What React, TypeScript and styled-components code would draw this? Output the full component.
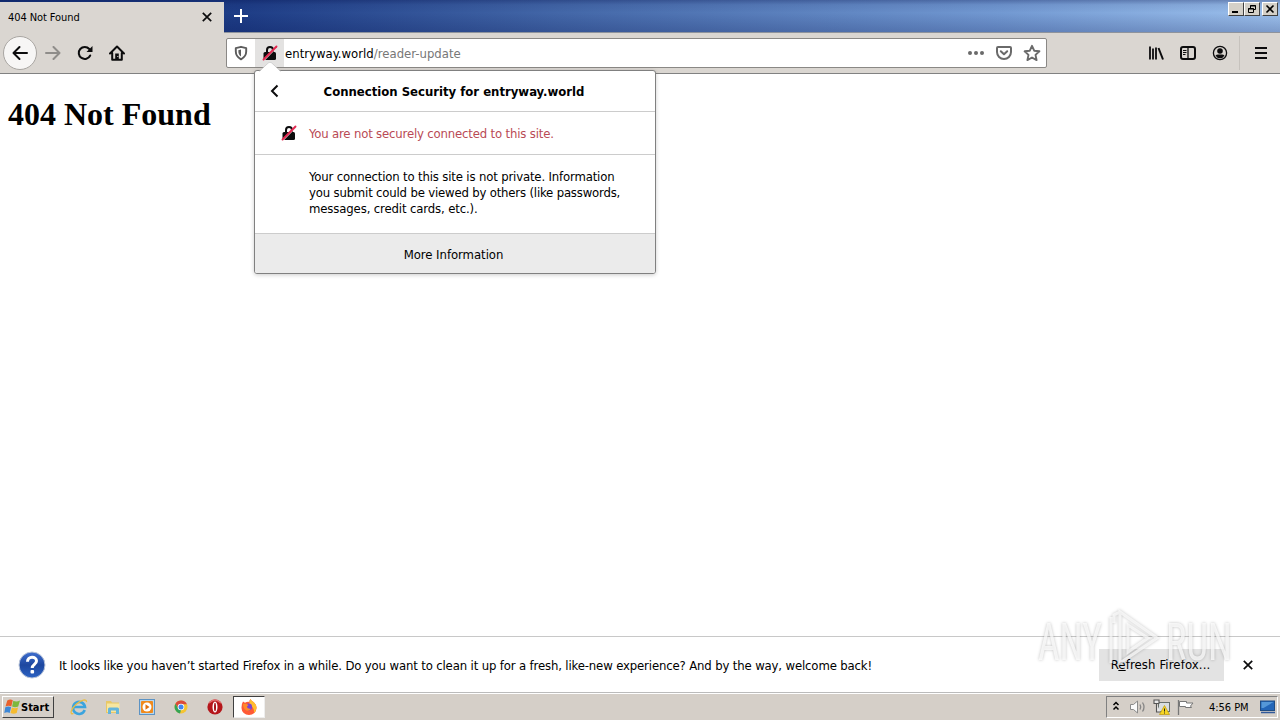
import { ReactNode } from 'react';
import styled, { createGlobalStyle } from 'styled-components';

const UI_FONT = "'DejaVu Sans Condensed', 'DejaVu Sans', sans-serif";

const COLORS = {
  chrome: '#dad6d1',
  taskbar: '#d5cfc8',
  line: '#818181',
  icon: '#0c0c0d',
  muted: '#6a6a6a',
  danger: '#b94a55',
};

const App = () => {
  return (
    <Screen>
      <GlobalStyle />
      <TitleBar>
        <Tab>
          <Label size={11} spacing={-0.08} drop={1}>404 Not Found</Label>
          <CloseIcon />
        </Tab>
        <NewTab>
          <svg width="14" height="14" viewBox="0 0 14 14">
            <path d="M7 0v14M0 7h14" stroke="#fff" strokeWidth="2" />
          </svg>
        </NewTab>
        <WindowControls>
          <WindowButton>
            <svg width="12" height="10"><path d="M2 8h6" stroke="#000" strokeWidth="2" /></svg>
          </WindowButton>
          <WindowButton>
            <svg width="12" height="10" fill="none" stroke="#000">
              <path d="M4.5 4V1.5h5v4H8M4 2h6M2.5 4.5h5v4h-5zM2 5h6" />
            </svg>
          </WindowButton>
          <WindowButton $gap>
            <svg width="12" height="10"><path d="M2.500 1.500l7 7M9.500 1.500l-7 7" stroke="#000" strokeWidth="1.600" /></svg>
          </WindowButton>
        </WindowControls>
      </TitleBar>

      <Toolbar>
        <BackButton>
          <ArrowIcon color={COLORS.icon} />
        </BackButton>
        <NavButtons>
          <Flip><ArrowIcon color="#8f8d8a" /></Flip>
          <ReloadIcon />
          <HomeIcon />
        </NavButtons>
        <UrlBar>
          <ShieldBox><ShieldIcon /></ShieldBox>
          <LockBox><LockIcon /></LockBox>
          <Label size={13} spacing={0.01} drop={2}>
            entryway.world<Path>/reader-update</Path>
          </Label>
          <UrlActions>
            <svg width="16" height="16" viewBox="0 0 16 16" fill={COLORS.muted}>
              <circle cx="2" cy="8" r="2" /><circle cx="8" cy="8" r="2" /><circle cx="14" cy="8" r="2" />
            </svg>
            <PocketIcon />
            <StarIcon />
          </UrlActions>
        </UrlBar>
        <ToolButtons>
          <LibraryIcon />
          <SidebarIcon />
          <AccountIcon />
        </ToolButtons>
        <MenuBox>
          <svg width="12" height="12" viewBox="0 0 12 12">
            <path d="M0 1h12M0 6h12M0 11h12" stroke={COLORS.icon} strokeWidth="2" />
          </svg>
        </MenuBox>
      </Toolbar>

      <Page>
        <PageTitle>404 Not Found</PageTitle>
      </Page>

      <Notification>
        <HelpIcon />
        <Label size={13} spacing={-0.143} drop={2}>
          It looks like you haven’t started Firefox in a while. Do you want to clean it up for a fresh, like-new experience? And by the way, welcome back!
        </Label>
        <RefreshButton>
          <Label size={13} spacing={0.12}>R<u>e</u>fresh Firefox...</Label>
        </RefreshButton>
        <CloseIcon />
      </Notification>

      <Taskbar>
        <StartButton>
          <WindowsLogo />
          Start
        </StartButton>
        <TaskIcons>
          <IeIcon />
          <FolderIcon />
          <PlayerIcon />
          <ChromeIcon />
          <OperaIcon />
        </TaskIcons>
        <ActiveTask><FirefoxIcon /></ActiveTask>
        <Tray>
          <TrayIcons />
          <Label size={11} spacing={-0.04} drop={1}>4:56 PM</Label>
          <DesktopIcon />
        </Tray>
      </Taskbar>

      <Popup>
        <PopupArrow width="22" height="10" viewBox="0 0 22 10">
          <path d="M0 10L9.500 .800Q11-.400 12.500.800L22 10z" fill="#fff" />
          <path d="M0 9.500L9.500.800Q11-.400 12.500.800L22 9.500" fill="none" stroke="#c4c4c4" strokeWidth=".7" />
        </PopupArrow>
        <PopupHeader>
          <svg width="10" height="14" viewBox="0 0 10 14">
            <path d="M7.500 1.500L2 7 7.500 12.500" fill="none" stroke={COLORS.icon} strokeWidth="2" />
          </svg>
          <HeaderText>
            <Label size={13} spacing={-0.01} bold>Connection Security for entryway.world</Label>
          </HeaderText>
        </PopupHeader>
        <PopupStatus>
          <LockIcon />
          <Label size={13} spacing={-0.17} drop={1}>You are not securely connected to this site.</Label>
        </PopupStatus>
        <PopupBody>
          <Label size={13} spacing={-0.16}>Your connection to this site is not private. Information</Label>
          <Label size={13} spacing={-0.18}>you submit could be viewed by others (like passwords,</Label>
          <Label size={13} spacing={-0.13}>messages, credit cards, etc.).</Label>
        </PopupBody>
        <PopupFooter>
          <Label size={13} spacing={-0.04} drop={2}>More Information</Label>
        </PopupFooter>
      </Popup>

      <Watermark />
    </Screen>
  );
};

export default App;

type LabelProps = { size: number; spacing: number; bold?: boolean; drop?: number; children: ReactNode };

const Label = ({ size, spacing, bold, drop = 0, children }: LabelProps) => (
  <LabelText $size={size} $spacing={spacing} $bold={bold} $drop={drop}>{children}</LabelText>
);

const CloseIcon = () => (
  <svg width="10" height="10" viewBox="0 0 10 10">
    <path d="M.8.8l8.400 8.400M9.200.8L.8 9.200" stroke={COLORS.icon} strokeWidth="1.700" />
  </svg>
);

const ArrowIcon = ({ color }: { color: string }) => (
  <svg width="16" height="16" viewBox="0 0 16 16" fill="none" stroke={color} strokeWidth="2" strokeLinecap="round" strokeLinejoin="round">
    <path d="M7.500 2L1.500 8l6 6M2 8h13" />
  </svg>
);

const ReloadIcon = () => (
  <svg width="16" height="16" viewBox="0 0 16 16">
    <path d="M13.200 10.500A6 6 0 1 1 12.300 4" fill="none" stroke={COLORS.icon} strokeWidth="2" strokeLinecap="round" />
    <path d="M15.500 1v6h-6z" fill={COLORS.icon} />
  </svg>
);

const HomeIcon = () => (
  <svg width="16" height="16" viewBox="0 0 16 16" fill="none" stroke={COLORS.icon} strokeWidth="2" strokeLinejoin="round" strokeLinecap="round">
    <path d="M1 8.500l7-7 7 7M3.200 8v6.800h9.600V8" />
    <path d="M8 8.500v6" strokeWidth="3.600" strokeLinecap="butt" />
    <path d="M8.300 11.500h1" stroke="#ddd" strokeWidth="1" strokeLinecap="butt" />
  </svg>
);

const ShieldIcon = () => (
  <svg width="16" height="16" viewBox="0 0 16 16">
    <path d="M8 1.800l5.200 1.300v3.400c0 3.500-1.900 6-5.200 7.800-3.300-1.800-5.200-4.300-5.200-7.800V3.100z" fill="none" stroke="#5c5c5c" strokeWidth="1.900" strokeLinejoin="round" />
    <path d="M8 4.500v7C6 10 5.300 8.500 5.300 5.200z" fill="#5c5c5c" />
  </svg>
);

const LockIcon = () => (
  <svg width="16" height="16" viewBox="0 0 16 16">
    <path d="M5 8V5a3 3 0 0 1 6 0v3" fill="none" stroke={COLORS.icon} strokeWidth="2" />
    <rect x="1.500" y="7" width="12.500" height="8" rx="1.500" fill={COLORS.icon} />
    <path d="M2.200 15L15 2.200" stroke="#f5d5dc" strokeWidth="1.200" />
    <path d="M1.500 14.500L14.500 1.500" stroke="#e22850" strokeWidth="1.900" strokeLinecap="round" />
  </svg>
);

const PocketIcon = () => (
  <svg width="18" height="16" viewBox="0 0 18 16" fill="none" stroke={COLORS.muted} strokeWidth="2" strokeLinecap="round" strokeLinejoin="round">
    <path d="M3 2h12q1 0 1 1V7A7 7 0 0 1 2 7V3q0-1 1-1z" />
    <path d="M5.800 6.300L9 9.300 12.200 6.300" />
  </svg>
);

const StarIcon = () => (
  <svg width="18" height="18" viewBox="0 0 18 18">
    <path d="M9 1.800l2.200 4.900 5.200.6-3.900 3.600 1.100 5.200L9 13.500l-4.600 2.600 1.100-5.200-3.900-3.600 5.200-.6z" fill="none" stroke={COLORS.muted} strokeWidth="1.900" strokeLinejoin="round" />
  </svg>
);

const LibraryIcon = () => (
  <svg width="16" height="16" viewBox="0 0 16 16" fill="none" stroke={COLORS.icon} strokeWidth="2">
    <path d="M2 1.500v13M5 3.500v11M8 2.500v12" strokeWidth="1.800" />
    <path d="M10.500 3l4.500 11.500" />
  </svg>
);

const SidebarIcon = () => (
  <svg width="16" height="16" viewBox="0 0 16 16" fill="none" stroke={COLORS.icon}>
    <rect x="1" y="2" width="14" height="12" rx="2" strokeWidth="2" />
    <path d="M8 2v12" strokeWidth="1.300" />
    <path d="M3 5.500h3.500M3 7.500h3.500M3 9.500h2.500" />
  </svg>
);

const AccountIcon = () => (
  <svg width="16" height="16" viewBox="0 0 16 16">
    <circle cx="8" cy="8" r="6.600" fill="none" stroke={COLORS.icon} strokeWidth="1.300" />
    <circle cx="8" cy="6" r="2.800" fill={COLORS.icon} />
    <path d="M3.500 10.500q1-1 2.500-1h4q1.500 0 2.500 1-1.500 2.800-4.500 2.800t-4.500-2.800z" fill={COLORS.icon} />
  </svg>
);

const HelpIcon = () => (
  <svg width="28" height="28" viewBox="0 0 28 28">
    <defs>
      <linearGradient id="help" x1="0" y1="0" x2="0" y2="1">
        <stop offset="0" stopColor="#3f6fd0" />
        <stop offset=".5" stopColor="#1d479f" />
        <stop offset="1" stopColor="#2c63c4" />
      </linearGradient>
    </defs>
    <circle cx="14" cy="14" r="13" fill="url(#help)" stroke="#b9c4d8" />
    <path d="M9.500 10.800c0-6 9-6 9-.8 0 3.400-4.300 3.300-4.300 7" fill="none" stroke="#fff" strokeWidth="3" />
    <rect x="12.500" y="19" width="3.600" height="3.500" rx="1" fill="#fff" />
  </svg>
);

const WindowsLogo = () => (
  <svg width="17" height="16" viewBox="0 0 16 16">
    <path d="M2.800 1.500q3-2 5.500-.2L6.800 7.500Q4.200 6 1 7.600z" fill="#e8602c" />
    <path d="M8.800 1.700q3 1.500 6.700-.2l-1.800 6q-3 1.500-6.100.1z" fill="#7db83c" />
    <path d="M.8 8.200q3-1.500 5.800 0l-1.400 5.800Q2.700 12.500-.2 14z" fill="#3d87d6" />
    <path d="M7.400 8.500q3 1.300 6.100 0L12.200 14q-3 1.500-6.200 0z" fill="#f6bb2e" />
  </svg>
);

const IeIcon = () => (
  <svg width="18" height="18" viewBox="0 0 18 18" fill="none">
    <path d="M14.700 12A6 6 0 1 1 15 9H4" stroke="#3ba4de" strokeWidth="2.600" />
    <path d="M3.500 15.500C-.5 17 .5 11.500 6 6.500 11 2 17 .2 16.500 4.200" stroke="#e9bd43" strokeWidth="1.300" />
  </svg>
);

const FolderIcon = () => (
  <svg width="18" height="18" viewBox="0 0 18 18">
    <path d="M2 3h5l1 1.500h7V15H2z" fill="#e8c867" />
    <path d="M3 5.500h12.500V14H3z" fill="#f7e6a0" />
    <path d="M4 16v-5q0-1.500 1.500-1.500h8q1.500 0 1.500 1.500v5h-3v-3.500H7V16z" fill="#64b5dc" />
  </svg>
);

const PlayerIcon = () => (
  <svg width="18" height="18" viewBox="0 0 18 18">
    <rect x="1.500" y="1.500" width="15" height="15" fill="#b7d7ef" stroke="#5c93c4" />
    <rect x="3" y="3" width="12" height="12" rx="1" fill="#f08a1d" />
    <circle cx="9" cy="9" r="4.500" fill="#fff" />
    <path d="M7.500 6.300l4 2.700-4 2.700z" fill="#e0700d" />
  </svg>
);

const ChromeIcon = () => (
  <svg width="18" height="18" viewBox="0 0 18 18">
    <circle cx="9" cy="9" r="6.500" fill="#f5c431" />
    <path d="M3.400 5.800A6.500 6.500 0 0 1 14.900 6.200H9L6.200 10.500z" fill="#db4a3b" />
    <path d="M3.400 5.800L6.400 10.700 9 12l-1 3.400A6.500 6.500 0 0 1 3.400 5.800z" fill="#35a456" />
    <circle cx="9" cy="9" r="3.300" fill="#fff" />
    <circle cx="9" cy="9" r="2.500" fill="#4285f0" />
  </svg>
);

const OperaIcon = () => (
  <svg width="18" height="18" viewBox="0 0 18 18">
    <circle cx="9" cy="9" r="7.600" fill="#b5161b" />
    <path d="M3 5q6-6 12 0" stroke="#e26b6b" strokeWidth="1.500" fill="none" />
    <ellipse cx="9" cy="9" rx="2.500" ry="5.500" fill="#fff" />
    <ellipse cx="9" cy="9" rx="1" ry="4.300" fill="#a51015" />
  </svg>
);

const FirefoxIcon = () => (
  <svg width="18" height="18" viewBox="0 0 18 18">
    <path d="M3 3.500l2 1.300Q7 3.500 9.500 4 9 2.500 10.500 1q.8 1.800 3 3Q16.700 6.500 16.500 10A7.500 7 0 0 1 1.500 10Q1.400 6 3 3.500z" fill="#ff5a36" />
    <path d="M10.500 1q.8 1.800 3 3Q16.700 6.500 16.500 10q-.3 3-2.500 5 .5-6-4.500-8Q9 3 10.500 1z" fill="#ffbd2f" />
    <circle cx="8.700" cy="9" r="3.400" fill="#7b43d0" />
    <path d="M3 6q3-1 5.500 1L6.800 8.700q.7 2.500 4.200 2-2 3-5 1.500Q3 10.500 3 6z" fill="#ff8a28" />
  </svg>
);

const TrayIcons = () => (
  <svg width="86" height="18" viewBox="0 0 86 18" fill="none">
    <path d="M1.500 7L4 4.500 6.500 7M1.500 11.500L4 9l2.500 2.500" stroke="#000" strokeWidth="1.500" />
    <path d="M18.500 6.500h3l4-3.500v12l-4-3.500h-3z" fill="#fafafa" stroke="#8a8a8a" />
    <path d="M28 6.500q1.500 2.500 0 5M30.500 4.500q3 4.500 0 9" stroke="#858585" strokeWidth="1.300" />
    <rect x="46.500" y="4.500" width="11" height="9" fill="#d9dee0" stroke="#68706c" />
    <path d="M42 2h5v3.500h-5zM44.500 5.500V14h4" fill="#e8e8e8" stroke="#555" strokeWidth="1.100" />
    <path d="M52.500 7.500l5 9h-10z" fill="#f7d624" stroke="#bd9a08" strokeWidth=".7" />
    <path d="M52.500 10.500v3M52.500 14.500v1" stroke="#222" />
    <path d="M66.500 2v15" stroke="#777" strokeWidth="1.300" />
    <path d="M67.500 3.500h7v1.500h6.500l-2.500 3 1 1.500h-6V8.500h-6z" fill="#fff" stroke="#777" />
  </svg>
);

const DesktopIcon = () => (
  <svg width="16" height="14" viewBox="0 0 16 14">
    <rect x=".5" y="1" width="14" height="9.500" fill="#2366b8" stroke="#1f4c83" />
    <path d="M1.500 2h12L3.500 8h-2z" fill="#5598d8" />
    <path d="M1 12.500h14" stroke="#31599a" strokeWidth="1.500" />
  </svg>
);

const Watermark = () => (
  <WatermarkSvg width="210" height="76" viewBox="0 0 210 76">
    <g fill="#fff" fillOpacity=".75" fontFamily="Roboto, sans-serif" fontSize="52">
      <text transform="translate(4 55) scale(.72 1)">ANY</text>
      <text transform="translate(132 55) scale(.74 1)">RUN</text>
    </g>
    <path d="M77 12v46M86 7v51l37-25zM86 7l-6 3v8M86 58l37-25M94 20v27l20-14z" fill="none" stroke="#fff" strokeOpacity=".7" strokeWidth="3" />
  </WatermarkSvg>
);

const GlobalStyle = createGlobalStyle`
  body {
    margin: 0;
    background: #fff;
    overflow: hidden;
  }
  * {
    box-sizing: border-box;
  }
  svg {
    display: block;
    flex-shrink: 0;
  }
`;

const Screen = styled.div`
  position: relative;
  display: flex;
  flex-direction: column;
  width: 1280px;
  height: 720px;
  background: #fff;
  font-family: ${UI_FONT};
  font-stretch: condensed;
  color: #000;
`;

const LabelText = styled.span<{ $size: number; $spacing: number; $bold?: boolean; $drop: number }>`
  padding-top: ${({ $drop }) => $drop}px;
  font-size: ${({ $size }) => $size}px;
  line-height: 16px;
  letter-spacing: ${({ $spacing }) => $spacing}px;
  font-weight: ${({ $bold }) => ($bold ? 700 : 400)};
  white-space: nowrap;
`;

const TitleBar = styled.div`
  display: flex;
  align-items: flex-start;
  height: 33px;
  border-bottom: 1px solid #8e939c;
  background:
    linear-gradient(180deg, rgba(0, 10, 70, 0.3), rgba(0, 10, 70, 0.08) 15%, transparent 40%, rgba(0, 10, 70, 0.2)),
    linear-gradient(90deg, #17367d 0, #1e3d86 240px, #4367a8 560px, #7299d2 1000px, #9cc0ec 1280px);
`;

const Tab = styled.div`
  display: flex;
  align-items: center;
  justify-content: space-between;
  width: 224px;
  height: 31px;
  margin-top: 2px;
  padding: 0 12px 1px 8px;
  background: ${COLORS.chrome};
`;

const NewTab = styled.div`
  padding: 9px 10px;
`;

const WindowControls = styled.div`
  display: flex;
  margin: 2px 2px 0 auto;
`;

const WindowButton = styled.div<{ $gap?: boolean }>`
  display: flex;
  align-items: center;
  justify-content: center;
  width: 16px;
  height: 14px;
  margin-left: ${({ $gap }) => ($gap ? 2 : 0)}px;
  background: #d4d0c8;
  border: 1px solid;
  border-color: #fff #404040 #404040 #fff;
`;

const Toolbar = styled.div`
  display: flex;
  align-items: center;
  height: 41px;
  padding: 0 0 1px 3px;
  background: ${COLORS.chrome};
  border-bottom: 1px solid ${COLORS.line};
`;

const BackButton = styled.div`
  display: flex;
  align-items: center;
  justify-content: center;
  width: 34px;
  height: 34px;
  border: 1px solid #a9a6a2;
  border-radius: 50%;
  background: #f7f6f5;
`;

const NavButtons = styled.div`
  display: flex;
  gap: 16px;
  width: 189px;
  padding-left: 8px;
`;

const Flip = styled.div`
  transform: scaleX(-1);
`;

const UrlBar = styled.div`
  display: flex;
  align-items: center;
  width: 821px;
  height: 30px;
  background: #fff;
  border: 1px solid #8a8885;
  border-radius: 2px;
`;

const ShieldBox = styled.div`
  width: 28px;
  padding-left: 6px;
`;

const LockBox = styled.div`
  display: flex;
  align-items: center;
  justify-content: center;
  width: 29px;
  height: 28px;
  margin-right: 1px;
  background: #e3e2e1;
`;

const Path = styled.span`
  color: #777;
`;

const UrlActions = styled.div`
  display: flex;
  align-items: center;
  gap: 10px;
  margin-left: auto;
  padding-right: 5px;

  > :first-child {
    margin-right: 1px;
  }
`;

const ToolButtons = styled.div`
  display: flex;
  gap: 16px;
  padding: 0 11px 0 101px;
`;

const MenuBox = styled.div`
  display: flex;
  align-items: center;
  height: 34px;
  padding-left: 15px;
  border-left: 1px solid #c6c2bd;
`;

const Page = styled.main`
  flex: 1;
  padding: 22px 8px;
`;

const PageTitle = styled.h1`
  margin: 0;
  font: bold 32px/37px 'Liberation Serif', serif;
`;

const Notification = styled.div`
  display: flex;
  align-items: center;
  height: 57px;
  padding: 0 27px 0 18px;
  border-top: 1px solid #c8c8c8;
  border-bottom: 1px solid #bbb;

  > span {
    margin-left: 13px;
  }
`;

const RefreshButton = styled.div`
  display: flex;
  align-items: center;
  justify-content: center;
  width: 125px;
  height: 32px;
  margin: 0 19px 0 auto;
  padding-right: 2px;
  background: #e3e3e3;
`;

const Taskbar = styled.div`
  display: flex;
  align-items: center;
  height: 27px;
  border-top: 1px solid #fff;
  padding: 1px 2px;
  background: ${COLORS.taskbar};
`;

const StartButton = styled.div`
  display: flex;
  align-items: center;
  width: 52px;
  height: 22px;
  padding-left: 1px;
  border: 1px solid;
  border-color: #fff #404040 #404040 #fff;
  font-size: 11px;
  font-weight: 700;
`;

const TaskIcons = styled.div`
  display: flex;
  gap: 16px;
  padding: 0 9px 0 16px;
`;

const ActiveTask = styled.div`
  display: flex;
  align-items: center;
  justify-content: center;
  width: 32px;
  height: 22px;
  background: #fff;
  border: 1px solid;
  border-color: #404040 #eee #eee #404040;
`;

const Tray = styled.div`
  display: flex;
  align-items: center;
  width: 172px;
  height: 22px;
  margin-left: auto;
  padding-left: 5px;
  border: 1px solid;
  border-color: #808080 #fff #fff #808080;

  > span {
    width: 51px;
    margin-left: 11px;
  }
`;

const Popup = styled.section`
  position: absolute;
  left: 254px;
  top: 70px;
  width: 402px;
  height: 204px;
  background: #fff;
  border: 1px solid #808080;
  border-radius: 3px;
  box-shadow: 0 1px 4px rgba(0, 0, 0, 0.2);
`;

const PopupArrow = styled.svg`
  position: absolute;
  left: 4px;
  top: -9px;
`;

const PopupHeader = styled.div`
  display: flex;
  align-items: center;
  height: 41px;
  padding: 0 15px;
  border-bottom: 1px solid #ccc;
`;

const HeaderText = styled.div`
  flex: 1;
  padding: 0 12px 2px 0;
  text-align: center;
`;

const PopupStatus = styled.div`
  display: flex;
  align-items: center;
  gap: 12px;
  height: 43px;
  padding-left: 26px;
  border-bottom: 1px solid #ccc;
  color: ${COLORS.danger};
`;

const PopupBody = styled.div`
  display: flex;
  flex-direction: column;
  height: 79px;
  padding: 14px 0 0 54px;
  border-bottom: 1px solid #ccc;
`;

const PopupFooter = styled.div`
  display: flex;
  align-items: center;
  justify-content: center;
  height: 39px;
  padding-right: 3px;
  background: #ebebeb;
  border-radius: 0 0 2px 2px;
`;

const WatermarkSvg = styled.svg`
  position: absolute;
  left: 1034px;
  top: 605px;
  filter: drop-shadow(0 0 1.5px rgba(0, 0, 0, 0.32));
`;
